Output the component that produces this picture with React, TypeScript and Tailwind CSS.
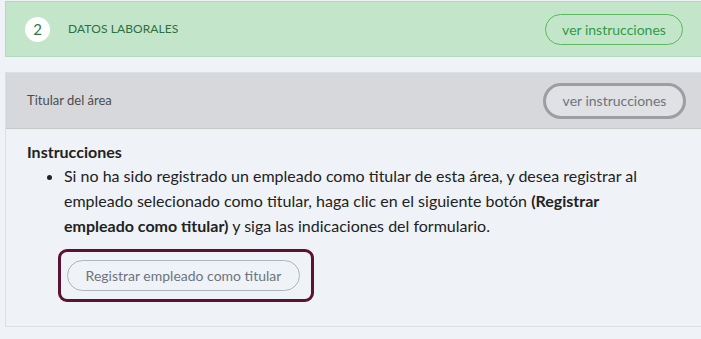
export default function App() {
  return (
    <div
      className="w-[701px] h-[339px] overflow-hidden bg-[#eff2f7] pt-[1px] pl-[5px]"
      style={{ fontFamily: "Lato, 'Open Sans', sans-serif" }}
    >
      {/* paso 2 */}
      <div className="h-[56px] bg-[#c3e6cb] border border-r-0 border-[#b1dbbb] flex items-center pl-[19px] pr-[18px]">
        <div className="w-[25px] h-[25px] rounded-full bg-white flex items-center justify-center text-[15px] text-[#2c7a3f]">
          2
        </div>
        <div className="ml-[18px] text-[12px] text-[#2e6f3e] uppercase tracking-[0.1px]">
          Datos laborales
        </div>
        <button className="ml-auto w-[138px] h-[31px] rounded-full border border-[#5cb85c] text-[14px] text-[#2f9a46]">
          ver instrucciones
        </button>
      </div>

      {/* tarjeta */}
      <div className="mt-[15px] h-[255px] border border-r-0 border-[#dcdfe3] flex flex-col">
        <div className="h-[56px] bg-[#d6d8db] border-b border-[#c6c8ca] flex items-center pl-[21px] pr-[15px]">
          <span className="text-[13px] text-[#4a4d50]">Titular del área</span>
          <button className="ml-auto w-[143px] h-[36px] rounded-full border-[3px] border-[#9b9ea2] bg-[#dfe1e4] text-[14px] text-[#6c757d]">
            ver instrucciones
          </button>
        </div>
        <div className="pl-[21px] pt-[12px]">
          <div className="text-[16px] font-bold text-[#222] leading-[22px]">Instrucciones</div>
          <ul className="list-disc pl-[37px] text-[16px] leading-[25px] text-[#222] pr-[12px]">
            <li>
              Si no ha sido registrado un empleado como titular de esta área, y desea registrar al
              empleado selecionado como titular, haga clic en el siguiente botón <b>(Registrar</b>
              <br />
              <b>empleado como titular)</b> y siga las indicaciones del formulario.
            </li>
          </ul>
          <div className="mt-[11px] ml-[31px] w-[256px] h-[53px] rounded-[9px] border-[3px] border-[#5b1333] flex items-center pl-[6px]">
            <button className="w-[233px] h-[31px] rounded-full border border-[#adb5bd] text-[14px] text-[#6c757d]">
              Registrar empleado como titular
            </button>
          </div>
        </div>
      </div>
    </div>
  );
}
